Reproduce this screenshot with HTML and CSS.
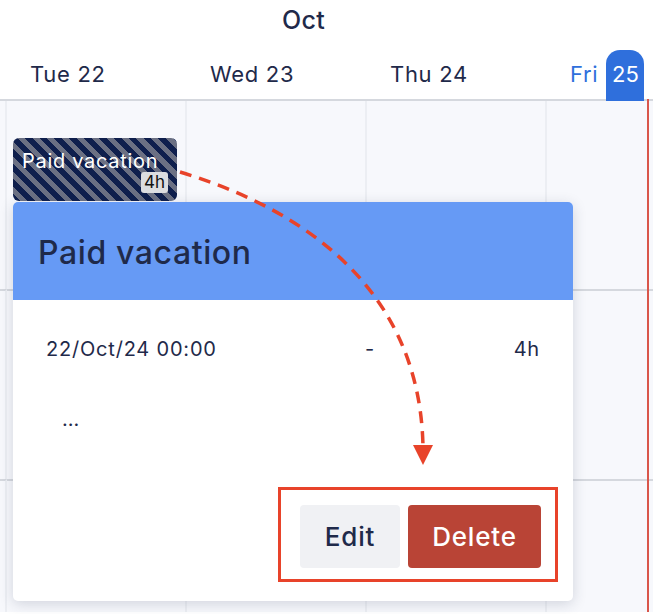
FILE: index.html
```html
<!DOCTYPE html>
<html>
<head>
    <meta charset="UTF-8">
    <title>Calendar</title>
    <link rel="stylesheet" href="styles.css">
</head>
<body>
    <div class="month">Oct</div>
    <div class="days">
        <div class="day-edge"></div>
        <div class="day">Tue 22</div>
        <div class="day">Wed 23</div>
        <div class="day">Thu 24</div>
        <div class="day today">Fri <span class="today-num">25</span></div>
    </div>
    <div class="grid">
        <div class="cell edge"></div>
        <div class="cell">
            <div class="event">
                <span class="event-title">Paid vacation</span>
                <span class="event-hours">4h</span>
            </div>
        </div>
        <div class="cell"></div>
        <div class="cell"></div>
        <div class="cell last"></div>

        <div class="cell edge row2"></div>
        <div class="cell row2"></div>
        <div class="cell row2"></div>
        <div class="cell row2"></div>
        <div class="cell last row2"></div>

        <div class="cell edge row2"></div>
        <div class="cell row2"></div>
        <div class="cell row2"></div>
        <div class="cell row2"></div>
        <div class="cell last row2"></div>
    </div>

    <div class="popup">
        <div class="popup-head">Paid vacation</div>
        <div class="popup-body">
            <div class="popup-row">
                <span class="from">22/Oct/24 00:00</span>
                <span>-</span>
                <span class="hours">4h</span>
            </div>
            <div class="popup-note">...</div>
            <div class="popup-actions">
                <div class="actions-box">
                    <button class="btn btn-edit">Edit</button>
                    <button class="btn btn-delete">Delete</button>
                </div>
            </div>
        </div>
    </div>

    <svg class="arrow" width="653" height="614" viewBox="0 0 653 614">
        <path d="M180 172 C 290 205, 420 280, 423 447" fill="none" stroke="#e8432a" stroke-width="3.5" stroke-dasharray="12 8"/>
        <polygon points="413,445 433,445 423,465" fill="#e8432a"/>
    </svg>
</body>
</html>
```

FILE: styles.css
```css
*{
    box-sizing: border-box;
}
body{
    margin: 0;
    width: 653px;
    height: 614px;
    overflow: hidden;
    font-family: Inter, "Noto Sans", sans-serif;
    color: #1f2a4a;
    background: white;
    position: relative;
}
.month{
    height: 40px;
    padding-top: 5px;
    padding-right: 46px;
    text-align: center;
    font-size: 25px;
    font-weight: 500;
    letter-spacing: 0.3px;
}
.days{
    display: grid;
    grid-template-columns: 7px 180px 180px 180px 1fr;
    height: 61px;
    border-bottom: 2px solid #d5d8de;
}
.day{
    padding-left: 23px;
    padding-top: 21px;
    font-size: 22px;
    letter-spacing: 0.7px;
}
.today{
    display: flex;
    align-items: flex-start;
    color: #2f6fdc;
}
.today-num{
    margin-left: 8px;
    margin-top: -11px;
    width: 38px;
    height: 51px;
    padding-top: 11px;
    text-align: center;
    letter-spacing: 0;
    background: #2f6fdc;
    color: white;
    border-radius: 14px 14px 0 0;
}
.grid{
    display: grid;
    grid-template-columns: 7px 180px 180px 180px 1fr;
    grid-template-rows: 188px 190px 133px;
    background: #f7f8fc;
}
.cell{
    border-right: 2px solid #eceef3;
}
.row2{
    border-top: 2px solid #d5d8de;
}
.last{
    border-right: none;
    position: relative;
}
.last::after{
    content: "";
    position: absolute;
    top: -2px;
    bottom: 0;
    left: 100px;
    width: 2px;
    background: #d9564b;
}
.event{
    position: relative;
    margin: 37px 0 0 6px;
    width: 164px;
    height: 63px;
    border-radius: 6px;
    background: repeating-linear-gradient(45deg, #0f1f4d 0 5.5px, #6b7083 5.5px 10.5px);
    color: white;
}
.event-title{
    display: block;
    padding: 11px 0 0 9px;
    font-size: 20px;
    letter-spacing: 0.7px;
}
.event-hours{
    position: absolute;
    right: 9px;
    bottom: 8px;
    padding: 0 3px;
    border-radius: 3px;
    background: #dcdde0;
    color: #111;
    font-size: 17px;
    line-height: 21px;
}
.popup{
    position: absolute;
    left: 13px;
    top: 202px;
    width: 560px;
    height: 399px;
    border-radius: 5px;
    background: white;
    box-shadow: 0 3px 14px rgba(40, 50, 80, 0.18);
    overflow: hidden;
}
.popup-head{
    height: 98px;
    padding: 31px 0 0 25px;
    background: #669af5;
    font-size: 32px;
    font-weight: 500;
    letter-spacing: 0.6px;
}
.popup-body{
    padding: 0 33px;
}
.popup-row{
    display: flex;
    padding-top: 37px;
    font-size: 20px;
    letter-spacing: 0.8px;
}
.from{
    width: 319px;
}
.hours{
    margin-left: auto;
}
.popup-note{
    padding: 46px 0 0 16px;
    font-size: 20px;
}
.popup-actions{
    display: flex;
    justify-content: flex-end;
    margin-top: 56px;
    margin-right: -18px;
}
.actions-box{
    display: flex;
    gap: 8px;
    padding: 15px 14px 11px 19px;
    border: 3px solid #e8432a;
}
.btn{
    height: 63px;
    border: 0;
    border-radius: 4px;
    font-family: Inter, "Noto Sans", sans-serif;
    font-size: 26px;
    font-weight: 500;
    letter-spacing: 0.8px;
}
.btn-edit{
    width: 100px;
    background: #f0f1f4;
    color: #1f2a4a;
}
.btn-delete{
    width: 133px;
    background: #b94436;
    color: white;
}
.arrow{
    position: absolute;
    left: 0;
    top: 0;
}
```
